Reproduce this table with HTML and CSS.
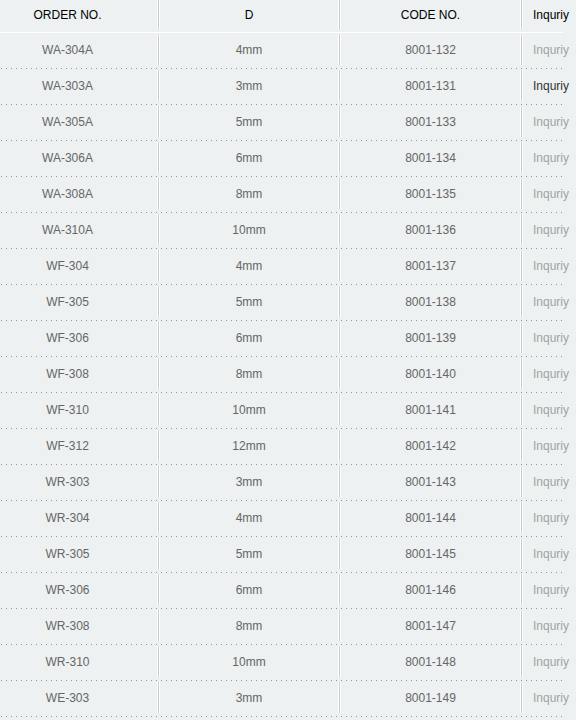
FILE: index.html
```html
<!DOCTYPE html>
<html>
<head>
<meta charset="utf-8">
<link rel="stylesheet" href="styles.css">
</head>
<body>
<div class="table">
  <div class="row head">
    <div class="cell c1">ORDER NO.</div>
    <div class="cell sep">D</div>
    <div class="cell sep">CODE NO.</div>
    <div class="cell sep c4">Inquriy</div>
  </div>
  <div class="row"><div class="cell c1">WA-304A</div><div class="cell sep">4mm</div><div class="cell sep">8001-132</div><div class="cell sep c4"><a class="inq">Inquriy</a></div></div>
  <div class="row"><div class="cell c1">WA-303A</div><div class="cell sep">3mm</div><div class="cell sep">8001-131</div><div class="cell sep c4"><a class="inq dark">Inquriy</a></div></div>
  <div class="row"><div class="cell c1">WA-305A</div><div class="cell sep">5mm</div><div class="cell sep">8001-133</div><div class="cell sep c4"><a class="inq">Inquriy</a></div></div>
  <div class="row"><div class="cell c1">WA-306A</div><div class="cell sep">6mm</div><div class="cell sep">8001-134</div><div class="cell sep c4"><a class="inq">Inquriy</a></div></div>
  <div class="row"><div class="cell c1">WA-308A</div><div class="cell sep">8mm</div><div class="cell sep">8001-135</div><div class="cell sep c4"><a class="inq">Inquriy</a></div></div>
  <div class="row"><div class="cell c1">WA-310A</div><div class="cell sep">10mm</div><div class="cell sep">8001-136</div><div class="cell sep c4"><a class="inq">Inquriy</a></div></div>
  <div class="row"><div class="cell c1">WF-304</div><div class="cell sep">4mm</div><div class="cell sep">8001-137</div><div class="cell sep c4"><a class="inq">Inquriy</a></div></div>
  <div class="row"><div class="cell c1">WF-305</div><div class="cell sep">5mm</div><div class="cell sep">8001-138</div><div class="cell sep c4"><a class="inq">Inquriy</a></div></div>
  <div class="row"><div class="cell c1">WF-306</div><div class="cell sep">6mm</div><div class="cell sep">8001-139</div><div class="cell sep c4"><a class="inq">Inquriy</a></div></div>
  <div class="row"><div class="cell c1">WF-308</div><div class="cell sep">8mm</div><div class="cell sep">8001-140</div><div class="cell sep c4"><a class="inq">Inquriy</a></div></div>
  <div class="row"><div class="cell c1">WF-310</div><div class="cell sep">10mm</div><div class="cell sep">8001-141</div><div class="cell sep c4"><a class="inq">Inquriy</a></div></div>
  <div class="row"><div class="cell c1">WF-312</div><div class="cell sep">12mm</div><div class="cell sep">8001-142</div><div class="cell sep c4"><a class="inq">Inquriy</a></div></div>
  <div class="row"><div class="cell c1">WR-303</div><div class="cell sep">3mm</div><div class="cell sep">8001-143</div><div class="cell sep c4"><a class="inq">Inquriy</a></div></div>
  <div class="row"><div class="cell c1">WR-304</div><div class="cell sep">4mm</div><div class="cell sep">8001-144</div><div class="cell sep c4"><a class="inq">Inquriy</a></div></div>
  <div class="row"><div class="cell c1">WR-305</div><div class="cell sep">5mm</div><div class="cell sep">8001-145</div><div class="cell sep c4"><a class="inq">Inquriy</a></div></div>
  <div class="row"><div class="cell c1">WR-306</div><div class="cell sep">6mm</div><div class="cell sep">8001-146</div><div class="cell sep c4"><a class="inq">Inquriy</a></div></div>
  <div class="row"><div class="cell c1">WR-308</div><div class="cell sep">8mm</div><div class="cell sep">8001-147</div><div class="cell sep c4"><a class="inq">Inquriy</a></div></div>
  <div class="row"><div class="cell c1">WR-310</div><div class="cell sep">10mm</div><div class="cell sep">8001-148</div><div class="cell sep c4"><a class="inq">Inquriy</a></div></div>
  <div class="row"><div class="cell c1">WE-303</div><div class="cell sep">3mm</div><div class="cell sep">8001-149</div><div class="cell sep c4"><a class="inq">Inquriy</a></div></div>
</div>
</body>
</html>
```

FILE: styles.css
```css
html, body {
  margin: 0;
  padding: 0;
  background: #edf1f2;
}
body {
  font-family: "Liberation Sans", Arial, sans-serif;
  font-size: 12px;
  color: #666;
  overflow: hidden;
}
.table {
  width: 563px;
}
.row {
  display: grid;
  grid-template-columns: 158px 181px 182px 42px;
  height: 35px;
  padding-bottom: 1px;
  background: repeating-linear-gradient(90deg, transparent 0 1px, #8f9496 1px 2px, transparent 2px 5px) left bottom / 100% 1px no-repeat;
}
.row.head {
  height: 32px;
  padding-bottom: 0;
  border-bottom: 1px solid #fff;
  background: none;
  color: #000;
}
.cell {
  margin: 1px 0 3px;
  height: 31px;
  line-height: 33px;
  text-align: center;
  white-space: nowrap;
}
.head .cell {
  margin: 0 0 2px;
  height: 30px;
  line-height: 30px;
}
.c1 {
  padding-right: 23px;
}
.sep {
  border-left: 1px solid #c9cdcf;
  box-shadow: -1px 0 0 #fff, inset 1px 0 0 #fff;
}
.c4 {
  text-align: left;
  padding-left: 11px;
  overflow: visible;
}
.inq {
  color: #a3a3a3;
  text-decoration: none;
}
.inq.dark {
  color: #333;
}
```
